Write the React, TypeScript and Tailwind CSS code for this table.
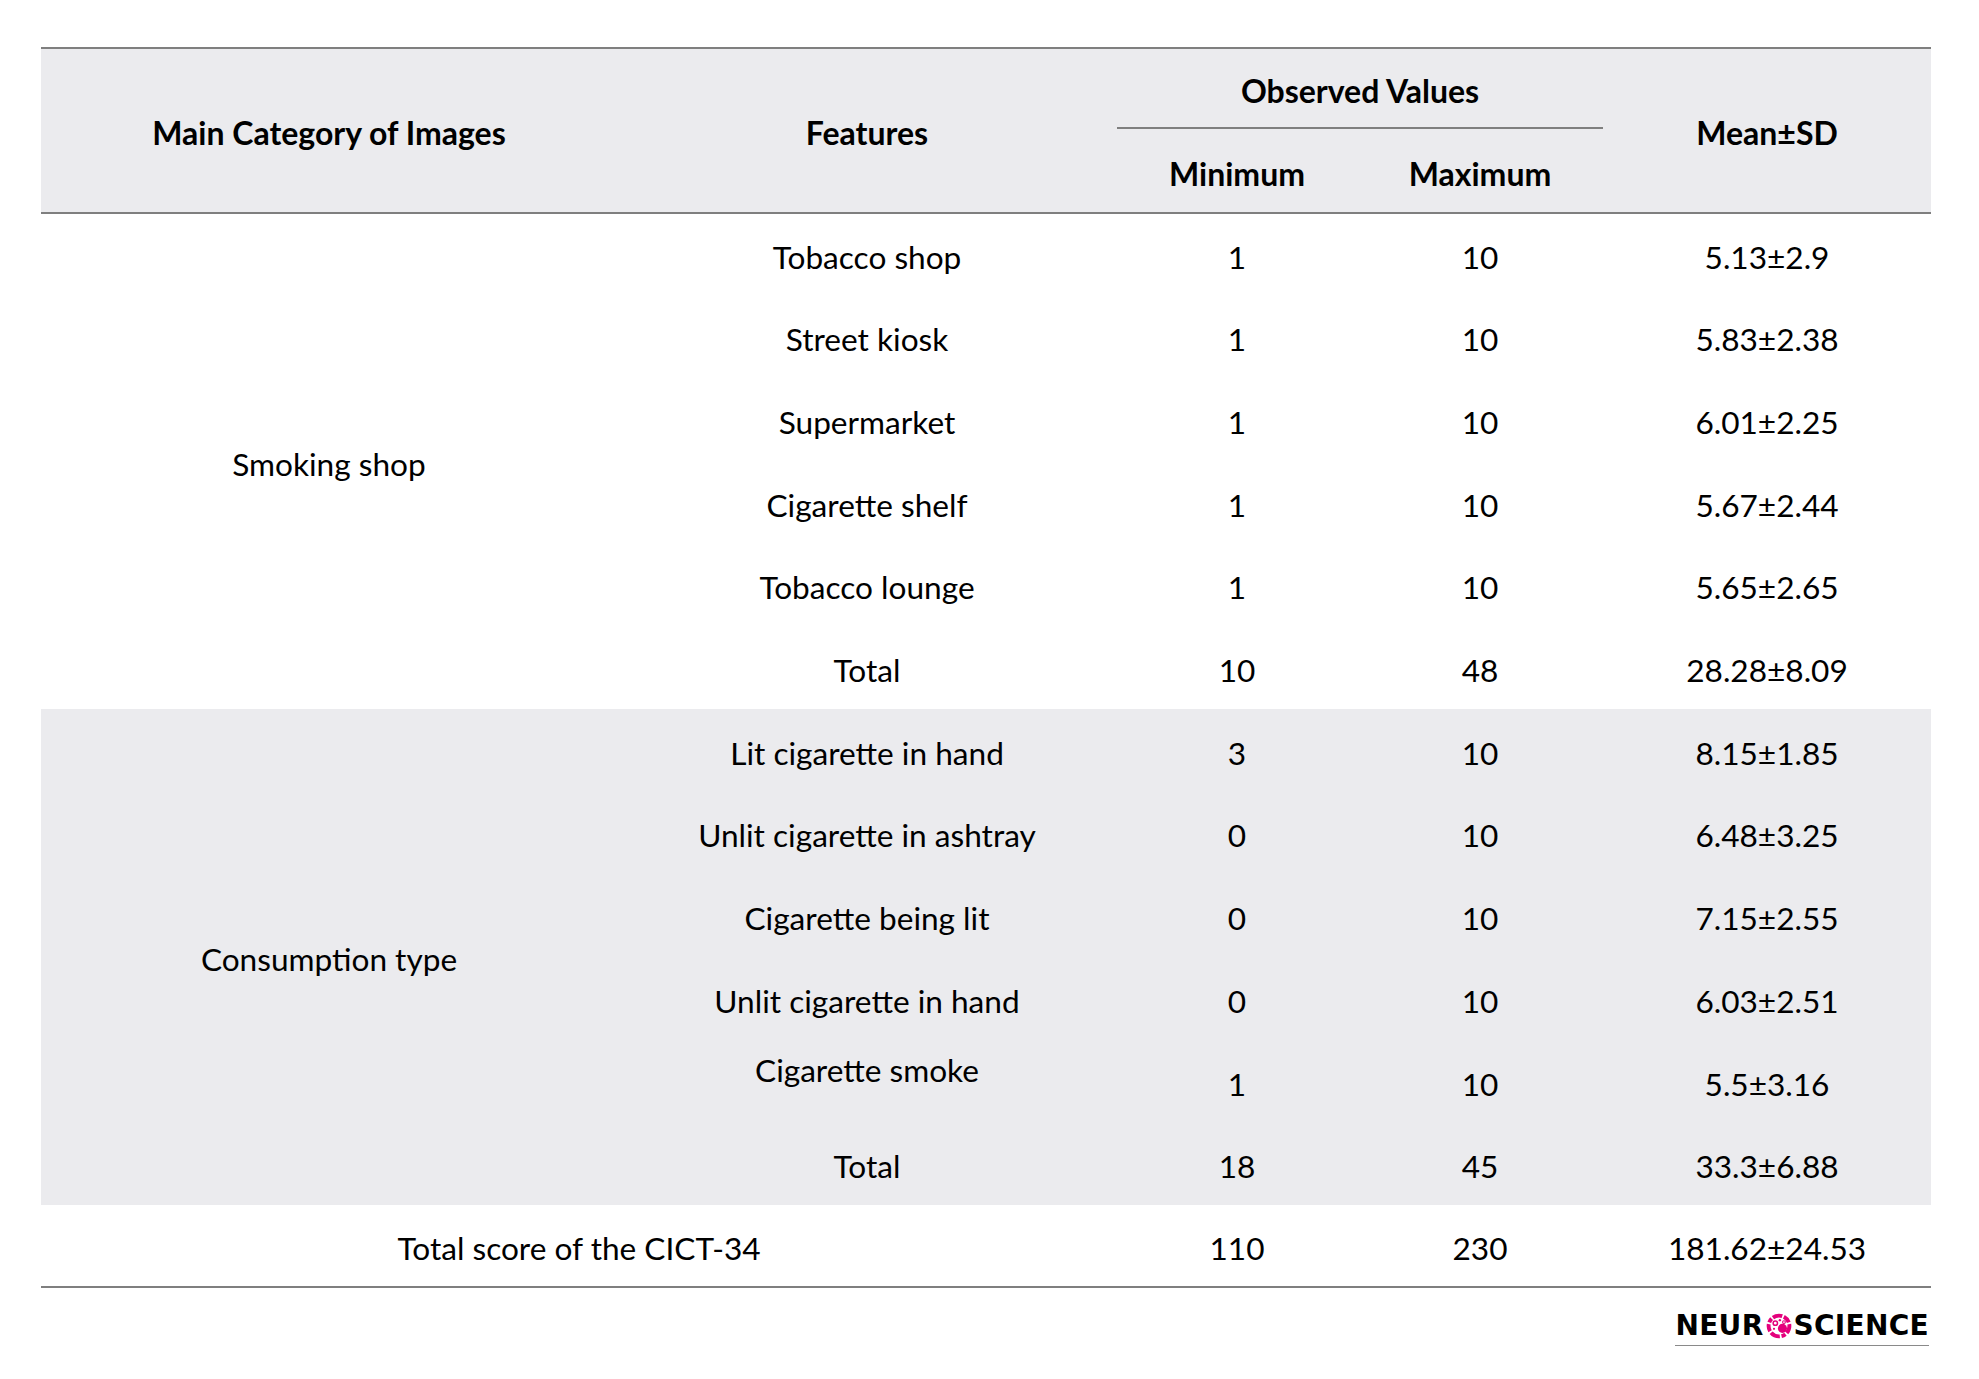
import React from "react";

type Row = { feature: string; min: string; max: string; mean: string; lift?: boolean };

const smokingShop: Row[] = [
  { feature: "Tobacco shop", min: "1", max: "10", mean: "5.13±2.9" },
  { feature: "Street kiosk", min: "1", max: "10", mean: "5.83±2.38" },
  { feature: "Supermarket", min: "1", max: "10", mean: "6.01±2.25" },
  { feature: "Cigarette shelf", min: "1", max: "10", mean: "5.67±2.44" },
  { feature: "Tobacco lounge", min: "1", max: "10", mean: "5.65±2.65" },
  { feature: "Total", min: "10", max: "48", mean: "28.28±8.09" },
];

const consumption: Row[] = [
  { feature: "Lit cigarette in hand", min: "3", max: "10", mean: "8.15±1.85" },
  { feature: "Unlit cigarette in ashtray", min: "0", max: "10", mean: "6.48±3.25" },
  { feature: "Cigarette being lit", min: "0", max: "10", mean: "7.15±2.55" },
  { feature: "Unlit cigarette in hand", min: "0", max: "10", mean: "6.03±2.51" },
  { feature: "Cigarette smoke", min: "1", max: "10", mean: "5.5±3.16", lift: true },
  { feature: "Total", min: "18", max: "45", mean: "33.3±6.88" },
];

// Magenta "O" of the journal mark
function NeuroMark() {
  return (
    <svg width="26" height="26" viewBox="0 0 24 24" className="mx-[2px]">
      <circle cx="12" cy="12" r="9.6" fill="none" stroke="#e4007c" strokeWidth="3.6" strokeDasharray="7 1.6 4 1.6 9 1.6" />
      <circle cx="8.6" cy="9.4" r="2" fill="none" stroke="#e4007c" strokeWidth="1.4" />
      <circle cx="12.8" cy="6.6" r="1.1" fill="#e4007c" />
      <circle cx="7.4" cy="14.6" r="1" fill="#e4007c" />
      <circle cx="15.2" cy="14.2" r="4.2" fill="#e4007c" />
      <circle cx="16.6" cy="8.4" r="1.3" fill="none" stroke="#e4007c" strokeWidth="1" />
    </svg>
  );
}

function Section({ label, rows, shaded }: { label: string; rows: Row[]; shaded?: boolean }) {
  return (
    <>
      {rows.map((r, i) => (
        <tr key={r.feature + i} className={`h-[82.7px] ${shaded ? "bg-[#ebebee]" : ""}`}>
          {i === 0 && (
            <td rowSpan={rows.length} className="text-center align-middle pt-[6px]">
              {label}
            </td>
          )}
          <td className={`text-center ${r.lift ? "align-top pt-[7px]" : "align-middle pt-[6px]"}`}>{r.feature}</td>
          <td className="text-center align-middle pt-[6px]">{r.min}</td>
          <td className="text-center align-middle pt-[6px]">{r.max}</td>
          <td className="text-center align-middle pt-[6px]">{r.mean}</td>
        </tr>
      ))}
    </>
  );
}

export default function App() {
  return (
    <div className="min-h-screen bg-white text-black font-['Lato',sans-serif] text-[31.6px]">
      <div className="ml-[41px] pt-[47px] w-[1890px]">
        <table className="w-full table-fixed border-collapse">
          <colgroup>
            <col className="w-[576px]" />
            <col className="w-[500px]" />
            <col className="w-[240px]" />
            <col className="w-[246px]" />
            <col className="w-[328px]" />
          </colgroup>
          <thead className="bg-[#ebebee] text-[32px]">
            <tr className="h-[82px] border-t-2 border-[#7f7f7f]">
              <th rowSpan={2} className="text-center align-middle pt-[4px] font-bold">
                Main Category of Images
              </th>
              <th rowSpan={2} className="text-center align-middle pt-[4px] font-bold">
                Features
              </th>
              <th colSpan={2} className="p-0 align-top font-bold">
                <div className="flex h-[80px] flex-col">
                  <div className="flex flex-1 items-center justify-center pt-[6px]">Observed Values</div>
                  <div className="h-[2px] bg-[#7f7f7f]" />
                </div>
              </th>
              <th rowSpan={2} className="text-center align-middle pt-[4px] font-bold">
                Mean±SD
              </th>
            </tr>
            <tr className="h-[83px] border-b-2 border-[#7f7f7f]">
              <th className="text-center align-middle pt-[6px] font-bold">Minimum</th>
              <th className="text-center align-middle pt-[6px] font-bold">Maximum</th>
            </tr>
          </thead>
          <tbody>
            <Section label="Smoking shop" rows={smokingShop} />
            <Section label="Consumption type" rows={consumption} shaded />
            <tr className="h-[82px] border-b-2 border-[#7f7f7f]">
              <td colSpan={2} className="text-center align-middle pt-[6px]">
                Total score of the CICT-34
              </td>
              <td className="text-center align-middle pt-[6px]">110</td>
              <td className="text-center align-middle pt-[6px]">230</td>
              <td className="text-center align-middle pt-[6px]">181.62±24.53</td>
            </tr>
          </tbody>
        </table>
        <div className="mt-[23px] flex justify-end pr-[2px]">
          <div className="flex flex-col">
            <div className="flex items-center font-['DejaVu_Sans',sans-serif] text-[28px] font-bold leading-[30px] tracking-[0.3px]">
              <span>NEUR</span>
              <NeuroMark />
              <span>SCIENCE</span>
            </div>
            <div className="mt-[4px] h-px bg-[#8a8a8a]" />
          </div>
        </div>
      </div>
    </div>
  );
}
